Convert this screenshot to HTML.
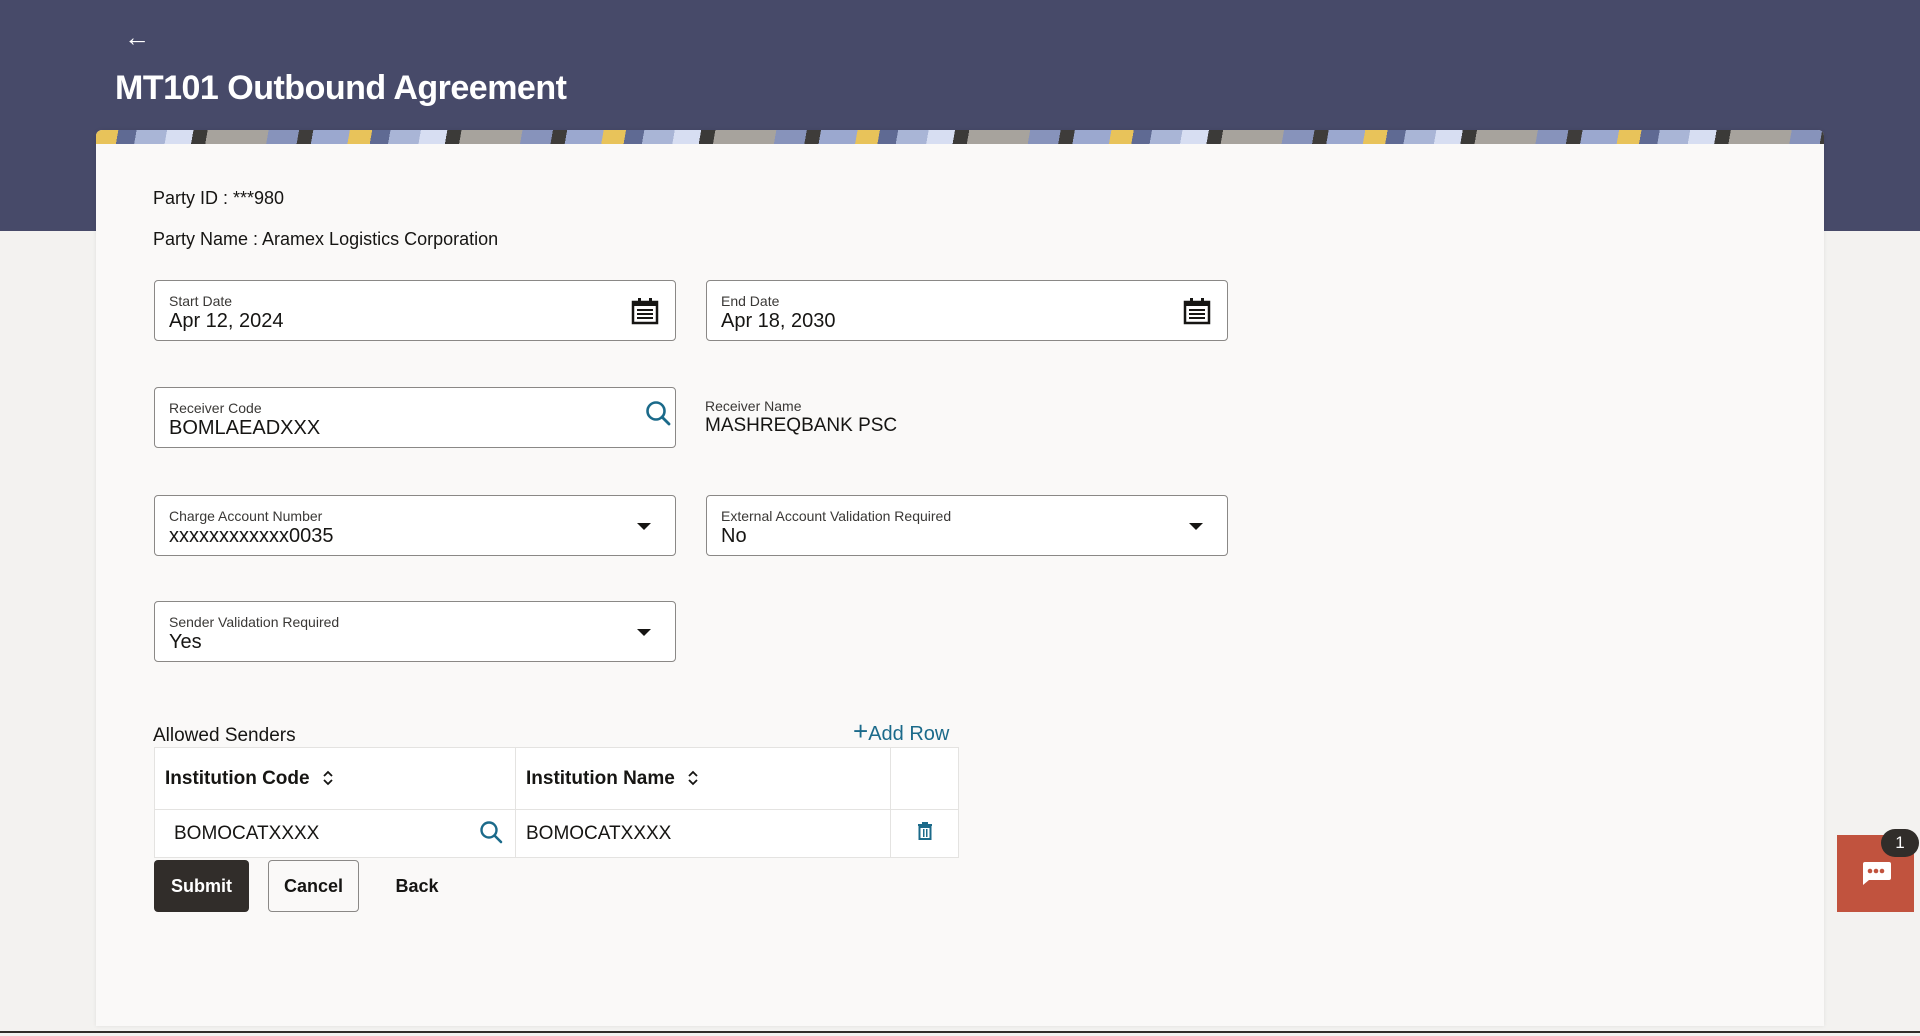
<!DOCTYPE html>
<html><head><meta charset="utf-8"><style>
*{box-sizing:border-box;margin:0;padding:0}
body{width:1920px;height:1036px;overflow:hidden;background:#f3f2f0;font-family:"Liberation Sans",sans-serif;color:#161513;position:relative}
.hdr{position:absolute;left:0;top:0;width:1920px;height:231px;background:#474a69}
.back{position:absolute;left:124px;top:22px;color:#fff;font-size:26px}
.title{position:absolute;left:115px;top:69px;color:#fff;font-size:34px;font-weight:bold;letter-spacing:-0.5px}
.card{position:absolute;left:96px;top:130px;width:1728px;height:896px;background:#faf9f8;border-radius:6px 6px 0 0;overflow:hidden;box-shadow:0 0 4px rgba(0,0,0,.08)}
.strip{height:14px;background:repeating-linear-gradient(100deg,#e8c35a 0 22px,#5f6a93 22px 40px,#a9b5d6 40px 70px,#d7def2 70px 96px,#3b3a38 96px 110px,#a7a39d 110px 170px,#8793bb 170px 200px,#3e3c3a 200px 214px,#9ba8cf 214px 250px)}
.t{position:absolute;font-size:18px}
.f{position:absolute;width:522px;height:61px;border:1px solid #8a8886;border-radius:4px;background:#fff}
.f .l{position:absolute;left:14px;top:12px;font-size:14px;color:#3a3836}
.f .v{position:absolute;left:14px;top:29px;font-size:20px}
.caret{position:absolute;right:24px;top:27px;width:0;height:0;border-left:7px solid transparent;border-right:7px solid transparent;border-top:7px solid #161513}
.ic{position:absolute}
table{position:absolute;left:154px;top:747px;width:805px;border-collapse:collapse;background:#fff}
td,th{border:1px solid #e4e3e1;font-size:19px;text-align:left;padding:0 10px}
th{height:62px;font-weight:bold}
td{height:48px}
.btn{position:absolute;top:860px;height:52px;border-radius:4px;font-size:18px;font-weight:bold;display:flex;align-items:center;justify-content:center}
.sort{margin-left:12px;vertical-align:-3px}
</style></head><body>
<div class="hdr"></div>
<div class="back">&#8592;</div>
<div class="title">MT101 Outbound Agreement</div>
<div class="card"><div class="strip"></div></div>

<div class="t" style="left:153px;top:188px">Party ID : ***980</div>
<div class="t" style="left:153px;top:229px">Party Name : Aramex Logistics Corporation</div>

<div class="f" style="left:154px;top:280px"><div class="l">Start Date</div><div class="v">Apr 12, 2024</div>
<svg class="ic" style="right:16px;top:16px" width="28" height="28" viewBox="0 0 28 28"><rect x="2" y="5" width="24" height="21" fill="#fff" stroke="#161513" stroke-width="2.5"/><rect x="2" y="5" width="24" height="4" fill="#161513"/><rect x="7" y="1" width="3" height="7" fill="#161513"/><rect x="18" y="1" width="3" height="7" fill="#161513"/><g fill="#161513"><rect x="6" y="12" width="16" height="2"/><rect x="6" y="16" width="16" height="2"/><rect x="6" y="20" width="16" height="2"/></g></svg></div>
<div class="f" style="left:706px;top:280px"><div class="l">End Date</div><div class="v">Apr 18, 2030</div>
<svg class="ic" style="right:16px;top:16px" width="28" height="28" viewBox="0 0 28 28"><rect x="2" y="5" width="24" height="21" fill="#fff" stroke="#161513" stroke-width="2.5"/><rect x="2" y="5" width="24" height="4" fill="#161513"/><rect x="7" y="1" width="3" height="7" fill="#161513"/><rect x="18" y="1" width="3" height="7" fill="#161513"/><g fill="#161513"><rect x="6" y="12" width="16" height="2"/><rect x="6" y="16" width="16" height="2"/><rect x="6" y="20" width="16" height="2"/></g></svg></div>

<div class="f" style="left:154px;top:387px"><div class="l">Receiver Code</div><div class="v">BOMLAEADXXX</div>
<svg class="ic" style="right:2px;top:12px" width="28" height="30" viewBox="0 0 28 30"><circle cx="11" cy="11" r="8.5" fill="none" stroke="#1b6a8a" stroke-width="2.6"/><line x1="17" y1="17" x2="24" y2="24" stroke="#1b6a8a" stroke-width="2.8" stroke-linecap="round"/></svg></div>
<div style="position:absolute;left:705px;top:398px;font-size:14px;color:#3a3836">Receiver Name</div>
<div style="position:absolute;left:705px;top:415px;font-size:19px">MASHREQBANK PSC</div>

<div class="f" style="left:154px;top:495px"><div class="l">Charge Account Number</div><div class="v">xxxxxxxxxxxx0035</div><div class="caret"></div></div>
<div class="f" style="left:706px;top:495px"><div class="l">External Account Validation Required</div><div class="v">No</div><div class="caret"></div></div>
<div class="f" style="left:154px;top:601px"><div class="l">Sender Validation Required</div><div class="v">Yes</div><div class="caret"></div></div>

<div class="t" style="left:153px;top:725px;font-size:19px">Allowed Senders</div>
<div style="position:absolute;left:853px;top:721px;font-size:20px;color:#1b6a8a"><span style="font-size:26px;line-height:20px">+</span>Add Row</div>

<table>
<tr><th style="width:361px">Institution Code<svg class="sort" width="12" height="18" viewBox="0 0 12 18"><path d="M2 7l4-4 4 4M2 11l4 4 4-4" fill="none" stroke="#161513" stroke-width="1.8"/></svg></th><th style="width:375px">Institution Name<svg class="sort" width="12" height="18" viewBox="0 0 12 18"><path d="M2 7l4-4 4 4M2 11l4 4 4-4" fill="none" stroke="#161513" stroke-width="1.8"/></svg></th><th></th></tr>
<tr><td style="position:relative;padding-left:19px">BOMOCATXXXX<svg style="position:absolute;right:10px;top:10px" width="26" height="26" viewBox="0 0 26 26"><circle cx="10" cy="10" r="7.5" fill="none" stroke="#1b6a8a" stroke-width="2.4"/><line x1="15.5" y1="15.5" x2="22" y2="22" stroke="#1b6a8a" stroke-width="2.6" stroke-linecap="round"/></svg></td><td>BOMOCATXXXX</td><td style="text-align:center"><svg width="16" height="18" viewBox="0 0 16 18"><rect x="1" y="2" width="14" height="2" fill="#1b6a8a"/><rect x="5" y="0" width="6" height="2" fill="#1b6a8a"/><rect x="2.5" y="5" width="11" height="12" fill="none" stroke="#1b6a8a" stroke-width="2"/><rect x="6" y="7" width="1.5" height="8" fill="#1b6a8a"/><rect x="9" y="7" width="1.5" height="8" fill="#1b6a8a"/></svg></td></tr>
</table>

<div class="btn" style="left:154px;width:95px;background:#312d2a;color:#fff">Submit</div>
<div class="btn" style="left:268px;width:91px;border:1px solid #8a8886;background:#faf9f8">Cancel</div>
<div class="btn" style="left:380px;width:74px">Back</div>

<div style="position:absolute;left:1837px;top:835px;width:77px;height:77px;background:#c1533e;display:flex;align-items:center;justify-content:center">
<svg width="32" height="26" viewBox="0 0 32 26"><path d="M3 1h26a2 2 0 0 1 2 2v14a2 2 0 0 1-2 2H9l-6 5V3a2 2 0 0 1 2-2z" fill="#fff"/><circle cx="10" cy="10" r="2.3" fill="#c1533e"/><circle cx="16" cy="10" r="2.3" fill="#c1533e"/><circle cx="22" cy="10" r="2.3" fill="#c1533e"/></svg></div>
<div style="position:absolute;left:1881px;top:829px;width:38px;height:28px;border-radius:14px;background:#312d2a;color:#fff;font-size:17px;display:flex;align-items:center;justify-content:center">1</div>
<div style="position:absolute;left:0;top:1031px;width:1920px;height:2px;background:#312d2a"></div>
</body></html>
